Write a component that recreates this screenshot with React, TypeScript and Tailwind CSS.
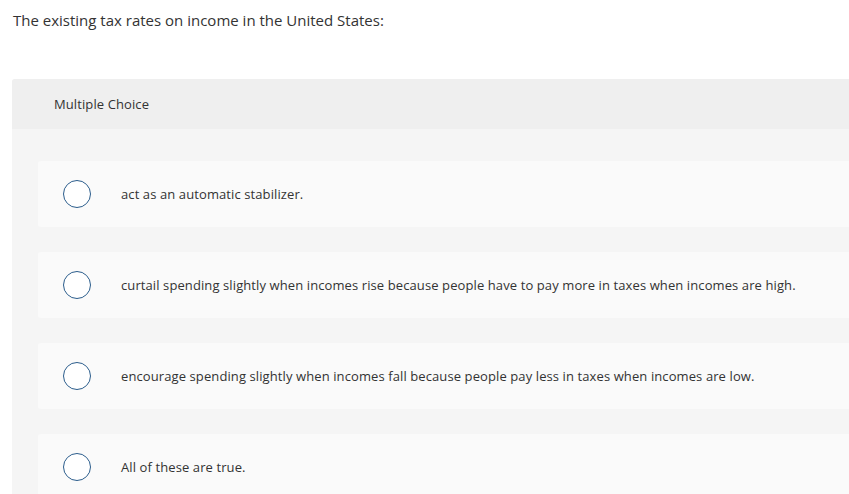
const choices: string[] = [
  "act as an automatic stabilizer.",
  "curtail spending slightly when incomes rise because people have to pay more in taxes when incomes are high.",
  "encourage spending slightly when incomes fall because people pay less in taxes when incomes are low.",
  "All of these are true.",
];

const App = () => {
  return (
    <div className="w-[849px] h-[494px] overflow-hidden bg-white font-['Open_Sans',sans-serif] text-[#333]">
      <p className="pl-[13px] pt-[10px] text-[15px] leading-5">
        The existing tax rates on income in the United States:
      </p>

      <div className="ml-[12px] mt-[49px] w-[900px] rounded-[3px] bg-[#f5f5f5]">
        <div className="h-[50px] flex items-center pl-[42px] pt-[1px] bg-[#efefef] rounded-t-[3px] text-[13px] tracking-[0.1px]">
          Multiple Choice
        </div>

        <div className="flex flex-col gap-[25px] pl-[26px] pt-[32px] pb-8">
          {choices.map((item, idx) => (
            <div
              key={idx}
              className="h-[66px] flex items-center pl-[25px] bg-[#fafafa] rounded-[3px]"
            >
              <span className="w-[28px] h-[28px] rounded-full border-[1.5px] border-[#2b5d8c] bg-white shrink-0" />
              <span className="ml-[30px] pt-[1px] text-[13px] tracking-[0.1px]">{item}</span>
            </div>
          ))}
        </div>
      </div>
    </div>
  );
};

export default App;
